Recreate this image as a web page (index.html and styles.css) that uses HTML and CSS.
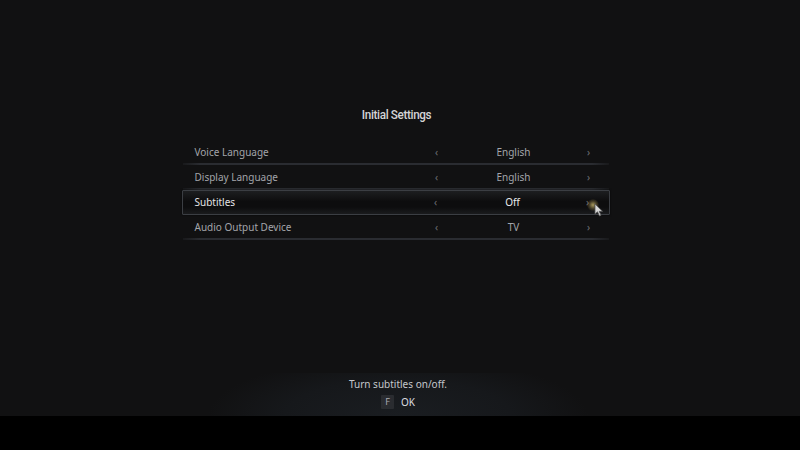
FILE: index.html
```html
<!DOCTYPE html>
<html>
<head>
<meta charset="utf-8">
<link rel="stylesheet" href="styles.css">
</head>
<body>
<div class="screen">
  <h1 class="title">Initial Settings</h1>
  <div class="list">
    <div class="row"><span class="label">Voice Language</span><div class="value"><span class="chev">‹</span><span class="val">English</span><span class="chev">›</span></div></div>
    <div class="row"><span class="label">Display Language</span><div class="value"><span class="chev">‹</span><span class="val">English</span><span class="chev">›</span></div></div>
    <div class="row active"><span class="label">Subtitles</span><div class="value"><span class="chev">‹</span><span class="val">Off</span><span class="chev">›</span></div>
      <div class="glow"></div>
      <svg class="cursor" width="10" height="14" viewBox="0 0 10 14"><path d="M1 1 L1 11 L3.5 8.8 L5.5 13 L7 12.3 L5.2 8.3 L8.5 8.3 Z" fill="#d8d8d8" stroke="#555" stroke-width="0.8"/></svg>
    </div>
    <div class="row"><span class="label">Audio Output Device</span><div class="value"><span class="chev">‹</span><span class="val">TV</span><span class="chev">›</span></div></div>
  </div>
  <div class="spacer"></div>
  <div class="help">
    <div class="help-text">Turn subtitles on/off.</div>
    <div class="help-keys"><span class="key">F</span><span class="ok">OK</span></div>
  </div>
</div>
</body>
</html>
```
FILE: styles.css
```css
html, body {
  margin: 0;
  padding: 0;
  background: #000;
}
body {
  width: 800px;
  height: 450px;
  overflow: hidden;
  font-family: "Noto Sans", "Open Sans", sans-serif;
}
.screen {
  height: 416px;
  background: #111112;
  display: flex;
  flex-direction: column;
  align-items: center;
}
.title {
  margin: 106px 0 0 -7px;
  height: 18px;
  line-height: 18px;
  font-family: "Roboto", "Liberation Sans", sans-serif;
  font-weight: 500;
  font-size: 13px;
  letter-spacing: -0.4px;
  color: #d4d4d6;
  transform: scaleX(0.9);
}
.list {
  margin-top: 16px;
  width: 428px;
  margin-left: -9px;
  display: flex;
  flex-direction: column;
}
.row {
  position: relative;
  height: 25px;
  display: flex;
  align-items: center;
  padding-left: 13px;
  box-sizing: border-box;
  font-size: 10px;
  color: #a3a5aa;
}
.row::after {
  content: "";
  position: absolute;
  left: 1px;
  right: 1px;
  bottom: 0;
  height: 2px;
  background: linear-gradient(90deg, rgba(42,44,48,0.3) 0%, #2a2c31 4%, #2a2c31 96%, rgba(42,44,48,0.3) 100%);
}
.row.active {
  border: 1px solid #3b3e43;
  border-radius: 1px;
  padding-left: 12px;
  color: #e4e4e6;
  background: linear-gradient(180deg, #1d1e20 0%, #0d0d0e 45%, #0d0d0e 70%, #1a1b1d 100%);
  box-shadow: 0 0 2px rgba(0,0,0,0.8);
}
.row.active::after { display: none; }
.label {
  flex: 1;
  line-height: 14px;
  padding-bottom: 1px;
}
.value {
  width: 160px;
  display: flex;
  align-items: center;
  justify-content: space-between;
  margin-right: 17px;
  padding-bottom: 1px;
}
.chev {
  color: #6f7177;
  font-size: 10px;
  width: 8px;
  text-align: center;
}
.val {
  flex: 1;
  text-align: center;
  padding-left: 2px;
}
.row.active .val { color: #ececee; }
.glow {
  position: absolute;
  left: 404px;
  top: 8px;
  width: 12px;
  height: 12px;
  border-radius: 50%;
  background: radial-gradient(circle, rgba(220,200,120,0.75) 0%, rgba(160,140,80,0.35) 45%, rgba(120,110,70,0) 75%);
}
.cursor {
  position: absolute;
  left: 411px;
  top: 12px;
}
.spacer { flex: 1; }
.help {
  width: 380px;
  height: 43px;
  margin-left: -4px;
  display: flex;
  flex-direction: column;
  align-items: center;
  background: radial-gradient(ellipse 50% 140% at 50% 100%, #1a1d21 0%, #16181b 60%, rgba(17,17,18,0) 100%);
}
.help-text {
  margin-top: 4px;
  font-size: 10px;
  line-height: 14px;
  color: #c5c7cb;
}
.help-keys {
  margin-top: 4px;
  display: flex;
  align-items: center;
  gap: 7px;
}
.key {
  width: 13px;
  height: 14px;
  background: #2a2c30;
  color: #a9abb0;
  font-size: 9px;
  line-height: 14px;
  text-align: center;
  border-radius: 1px;
}
.ok {
  font-size: 10px;
  color: #dcdde0;
}
```
